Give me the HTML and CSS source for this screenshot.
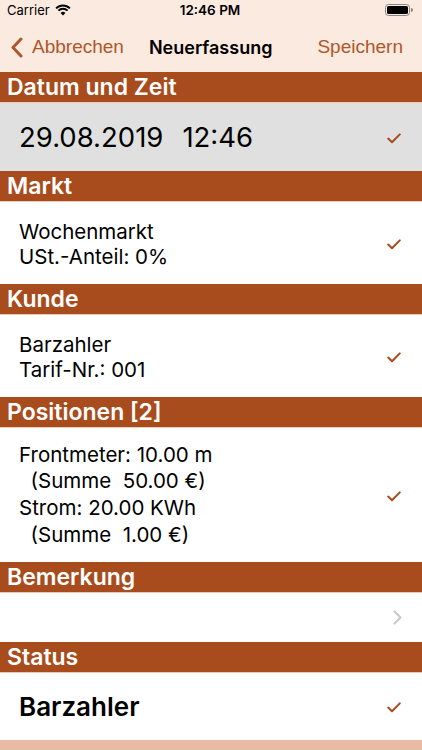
FILE: index.html
```html
<!DOCTYPE html>
<html lang="de">
<head>
    <meta charset="UTF-8">
    <title>Neuerfassung</title>
    <link rel="stylesheet" href="styles.css">
</head>
<body>
    <div id="wrap">
        <div class="status">
            <div class="status-left">
                <span>Carrier</span>
                <svg class="wifi" width="16" height="12" viewBox="0 0 16 12">
                    <path d="M8 11.5 L5.6 8.9 A3.4 3.4 0 0 1 10.4 8.9 Z" fill="#000"/>
                    <path d="M3.4 6.7 A6.5 6.5 0 0 1 12.6 6.7" fill="none" stroke="#000" stroke-width="1.9"/>
                    <path d="M1.1 4.3 A9.8 9.8 0 0 1 14.9 4.3" fill="none" stroke="#000" stroke-width="1.9"/>
                </svg>
            </div>
            <div class="status-time">12:46 PM</div>
            <div class="status-right">
                <svg width="28" height="12" viewBox="0 0 28 12">
                    <rect x="0.5" y="0.5" width="24" height="11" rx="3" fill="none" stroke="#8a8580"/>
                    <rect x="2" y="2" width="21" height="8" rx="1.5" fill="#000"/>
                    <path d="M26 4 v4 a1.5 1.5 0 0 0 0 -4z" fill="#8a8580"/>
                </svg>
            </div>
        </div>
        <div class="nav">
            <a href="#" class="nav-back">
                <svg width="13" height="21" viewBox="0 0 13 21">
                    <path d="M11 2 L3 10.5 L11 19" fill="none" stroke="#b0562a" stroke-width="3" stroke-linecap="round" stroke-linejoin="round"/>
                </svg>
                <span>Abbrechen</span>
            </a>
            <div class="nav-title">Neuerfassung</div>
            <a href="#" class="nav-save">Speichern</a>
        </div>

        <div class="head">Datum und Zeit</div>
        <div class="row row-date">
            <div class="big date"><span>29.08.2019</span><span>12:46</span></div>
            <svg class="check" width="14" height="11" viewBox="0 0 14 11"><path d="M1.2 5.6 L5 9.2 L12.8 1.4" fill="none" stroke="#a84a1e" stroke-width="2" stroke-linecap="round" stroke-linejoin="round"/></svg>
        </div>

        <div class="head">Markt</div>
        <div class="row row-two">
            <div class="text">Wochenmarkt<br>USt.-Anteil: 0%</div>
            <svg class="check" width="14" height="11" viewBox="0 0 14 11"><path d="M1.2 5.6 L5 9.2 L12.8 1.4" fill="none" stroke="#a84a1e" stroke-width="2" stroke-linecap="round" stroke-linejoin="round"/></svg>
        </div>

        <div class="head">Kunde</div>
        <div class="row row-two">
            <div class="text">Barzahler<br>Tarif-Nr.: 001</div>
            <svg class="check" width="14" height="11" viewBox="0 0 14 11"><path d="M1.2 5.6 L5 9.2 L12.8 1.4" fill="none" stroke="#a84a1e" stroke-width="2" stroke-linecap="round" stroke-linejoin="round"/></svg>
        </div>

        <div class="head">Positionen [2]</div>
        <div class="row row-pos">
            <div class="text pos">Frontmeter: 10.00 m<br>&nbsp;&nbsp;(Summe&nbsp;&nbsp;50.00 €)<br>Strom: 20.00 KWh<br>&nbsp;&nbsp;(Summe&nbsp;&nbsp;1.00 €)</div>
            <svg class="check" width="14" height="11" viewBox="0 0 14 11"><path d="M1.2 5.6 L5 9.2 L12.8 1.4" fill="none" stroke="#a84a1e" stroke-width="2" stroke-linecap="round" stroke-linejoin="round"/></svg>
        </div>

        <div class="head">Bemerkung</div>
        <div class="row row-note">
            <div class="text"></div>
            <svg class="chev" width="9" height="15" viewBox="0 0 9 15"><path d="M1.5 1.5 L7.5 7.5 L1.5 13.5" fill="none" stroke="#c7c7cc" stroke-width="2" stroke-linecap="round" stroke-linejoin="round"/></svg>
        </div>

        <div class="head">Status</div>
        <div class="row row-status">
            <div class="big bold">Barzahler</div>
            <svg class="check" width="14" height="11" viewBox="0 0 14 11"><path d="M1.2 5.6 L5 9.2 L12.8 1.4" fill="none" stroke="#a84a1e" stroke-width="2" stroke-linecap="round" stroke-linejoin="round"/></svg>
        </div>

        <div class="foot"></div>
    </div>
</body>
</html>
```
FILE: styles.css
```css
body {
    margin: 0;
    padding: 0;
    font-family: Inter, "Liberation Sans", Arial, sans-serif;
    background: #fbeadf;
}
a {
    text-decoration: none;
    color: #b0562a;
}
#wrap {
    width: 422px;
    height: 750px;
    overflow: hidden;
    display: flex;
    flex-direction: column;
}
.status {
    height: 20px;
    display: flex;
    align-items: center;
    padding: 0 9px 0 7px;
    font-size: 13px;
    color: #000;
}
.status-left {
    flex: 1;
    display: flex;
    align-items: center;
    gap: 5px;
}
.status-time {
    font-weight: 600;
    font-size: 13.5px;
}
.status-right {
    flex: 1;
    display: flex;
    justify-content: flex-end;
}
.nav {
    height: 52px;
    display: flex;
    align-items: center;
    padding: 0 19px 0 10px;
    font-family: "Liberation Sans", Arial, sans-serif;
    font-size: 19px;
}
.nav-back {
    display: flex;
    align-items: center;
    gap: 9px;
    margin-top: 2px;
}
.nav-title {
    font-family: Inter, "Liberation Sans", sans-serif;
    font-weight: 600;
    font-size: 18px;
    color: #000;
    margin-left: 25px;
    margin-top: 2px;
}
.nav-save {
    margin-left: auto;
    margin-top: 2px;
}
.head {
    height: 30px;
    line-height: 31px;
    background: #a94c1d;
    border-bottom: 1px solid #efc9b4;
    color: #fff;
    font-weight: 600;
    font-size: 23px;
    padding-left: 7px;
}
.row {
    display: flex;
    align-items: center;
    padding: 0 21px 0 19px;
    background: #fff;
    color: #000;
}
.row .text {
    flex: 1;
    font-size: 20.5px;
    line-height: 25px;
}
.row .big {
    flex: 1;
    font-size: 27.5px;
}
.row .date {
    display: flex;
    gap: 19px;
}
.row .bold {
    font-weight: 600;
    font-size: 26px;
}
.row-date {
    height: 68px;
    background: #e0e0e0;
}
.row-two {
    height: 81px;
    padding-top: 1px;
}
.row-pos {
    height: 134px;
}
.row-pos .text {
    line-height: 26.7px;
}
.row-note {
    height: 49px;
    padding-right: 20px;
}
.row-status {
    height: 67px;
}
.check {
    margin-top: 2px;
}
.foot {
    flex: 1;
    background: #e8bba5;
}
```
